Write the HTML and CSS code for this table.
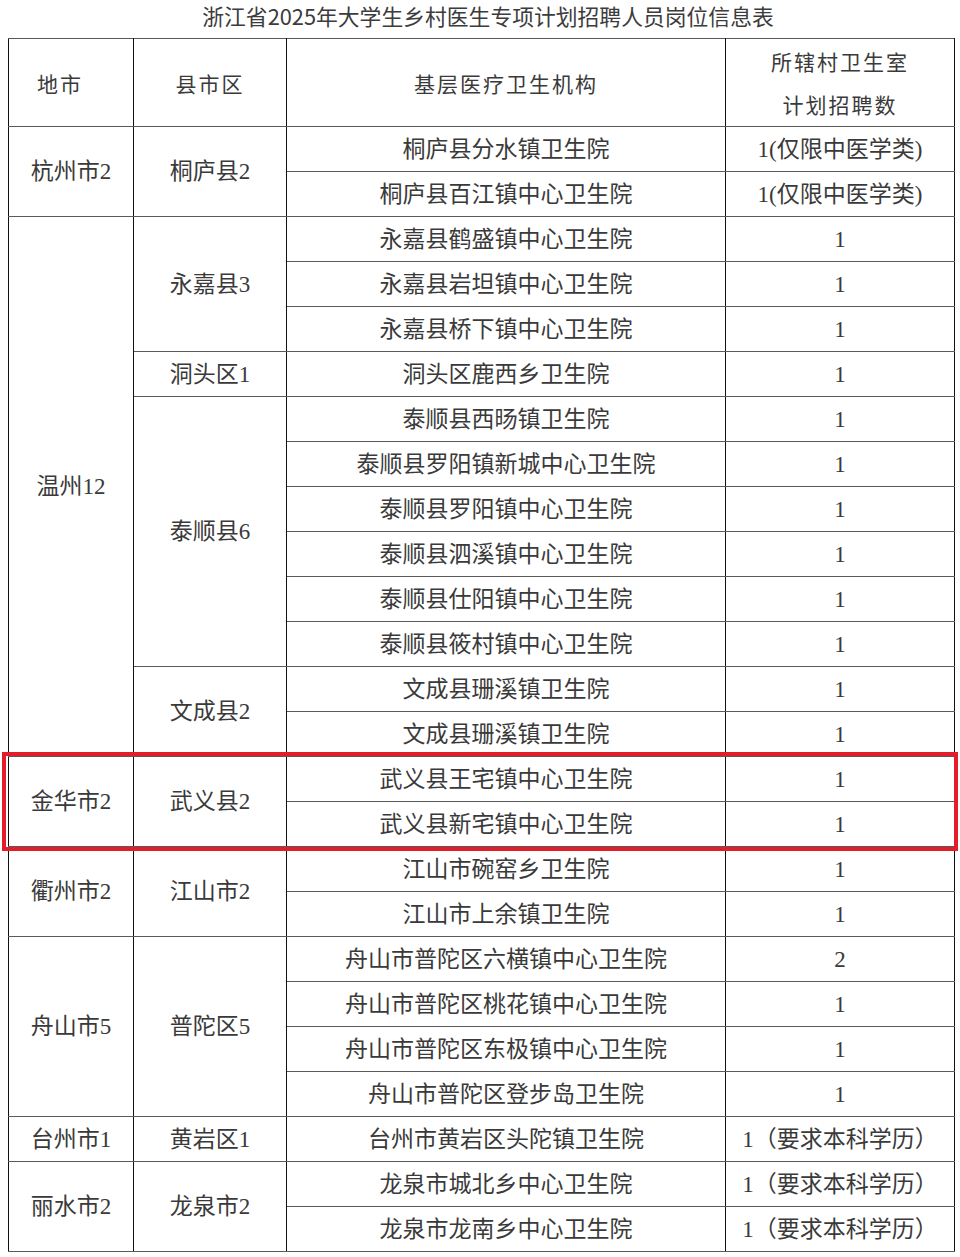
FILE: index.html
```html
<!DOCTYPE html>
<html lang="zh">
<head>
<meta charset="utf-8">
<title>岗位信息表</title>
<link rel="stylesheet" href="styles.css">
</head>
<body>
<div class="page">
  <div class="title">浙江省2025年大学生乡村医生专项计划招聘人员岗位信息表</div>
  <table class="tbl">
    <colgroup>
      <col class="c1"><col class="c2"><col class="c3"><col class="c4">
    </colgroup>
    <thead>
      <tr class="head">
        <th class="first">地市</th><th>县市区</th><th>基层医疗卫生机构</th><th class="two">所辖村卫生室<br>计划招聘数</th>
      </tr>
    </thead>
    <tbody>
      <tr><td rowspan="2">杭州市2</td><td rowspan="2">桐庐县2</td><td>桐庐县分水镇卫生院</td><td>1(仅限中医学类)</td></tr>
      <tr><td>桐庐县百江镇中心卫生院</td><td>1(仅限中医学类)</td></tr>
      <tr><td rowspan="12">温州12</td><td rowspan="3">永嘉县3</td><td>永嘉县鹤盛镇中心卫生院</td><td>1</td></tr>
      <tr><td>永嘉县岩坦镇中心卫生院</td><td>1</td></tr>
      <tr><td>永嘉县桥下镇中心卫生院</td><td>1</td></tr>
      <tr><td>洞头区1</td><td>洞头区鹿西乡卫生院</td><td>1</td></tr>
      <tr><td rowspan="6">泰顺县6</td><td>泰顺县西旸镇卫生院</td><td>1</td></tr>
      <tr><td>泰顺县罗阳镇新城中心卫生院</td><td>1</td></tr>
      <tr><td>泰顺县罗阳镇中心卫生院</td><td>1</td></tr>
      <tr><td>泰顺县泗溪镇中心卫生院</td><td>1</td></tr>
      <tr><td>泰顺县仕阳镇中心卫生院</td><td>1</td></tr>
      <tr><td>泰顺县筱村镇中心卫生院</td><td>1</td></tr>
      <tr><td rowspan="2">文成县2</td><td>文成县珊溪镇卫生院</td><td>1</td></tr>
      <tr><td>文成县珊溪镇卫生院</td><td>1</td></tr>
      <tr><td rowspan="2">金华市2</td><td rowspan="2">武义县2</td><td>武义县王宅镇中心卫生院</td><td>1</td></tr>
      <tr><td>武义县新宅镇中心卫生院</td><td>1</td></tr>
      <tr><td rowspan="2">衢州市2</td><td rowspan="2">江山市2</td><td>江山市碗窑乡卫生院</td><td>1</td></tr>
      <tr><td>江山市上余镇卫生院</td><td>1</td></tr>
      <tr><td rowspan="4">舟山市5</td><td rowspan="4">普陀区5</td><td>舟山市普陀区六横镇中心卫生院</td><td>2</td></tr>
      <tr><td>舟山市普陀区桃花镇中心卫生院</td><td>1</td></tr>
      <tr><td>舟山市普陀区东极镇中心卫生院</td><td>1</td></tr>
      <tr><td>舟山市普陀区登步岛卫生院</td><td>1</td></tr>
      <tr><td>台州市1</td><td>黄岩区1</td><td>台州市黄岩区头陀镇卫生院</td><td>1（要求本科学历）</td></tr>
      <tr><td rowspan="2">丽水市2</td><td rowspan="2">龙泉市2</td><td>龙泉市城北乡中心卫生院</td><td>1（要求本科学历）</td></tr>
      <tr><td>龙泉市龙南乡中心卫生院</td><td>1（要求本科学历）</td></tr>
    </tbody>
  </table>
  <div class="highlight"></div>
</div>
</body>
</html>
```

FILE: styles.css
```css
html, body {
  margin: 0;
  padding: 0;
  background: #ffffff;
}
.page {
  position: relative;
  width: 960px;
  height: 1257px;
  color: #3a3a3a;
  font-family: "Liberation Serif", "Noto Sans CJK SC", serif;
}
.title {
  height: 38px;
  line-height: 32px;
  text-align: center;
  font-family: "Noto Sans CJK SC", sans-serif;
  font-size: 21.8px;
  color: #3c3c3c;
  padding-left: 16px;
  box-sizing: border-box;
}
.tbl {
  margin-left: 8px;
  width: 946px;
  table-layout: fixed;
  border-collapse: collapse;
  border: 1px solid #555555;
}
.c1 { width: 125px; }
.c2 { width: 153px; }
.c3 { width: 439px; }
.c4 { width: 229px; }
.tbl th, .tbl td {
  padding: 0;
  text-align: center;
  vertical-align: middle;
  font-weight: normal;
  font-size: 23px;
  border-top: 1px solid #5a5a5a;
  border-bottom: 1px solid #5a5a5a;
  border-left: 1px solid #111111;
  border-right: 1px solid #111111;
}
.tbl tbody td {
  height: 43px;
  line-height: 30px;
  padding-top: 1px;
}
.tbl .head th {
  height: 87px;
  font-family: "Noto Sans CJK SC", sans-serif;
  font-size: 21px;
  letter-spacing: 2px;
}
.tbl .head th.first {
  padding-right: 22px;
}
.tbl .head th.two {
  line-height: 43px;
}
.highlight {
  position: absolute;
  left: 2px;
  top: 752px;
  width: 948px;
  height: 91px;
  border: 4px solid #e31d2a;
  pointer-events: none;
}
```
